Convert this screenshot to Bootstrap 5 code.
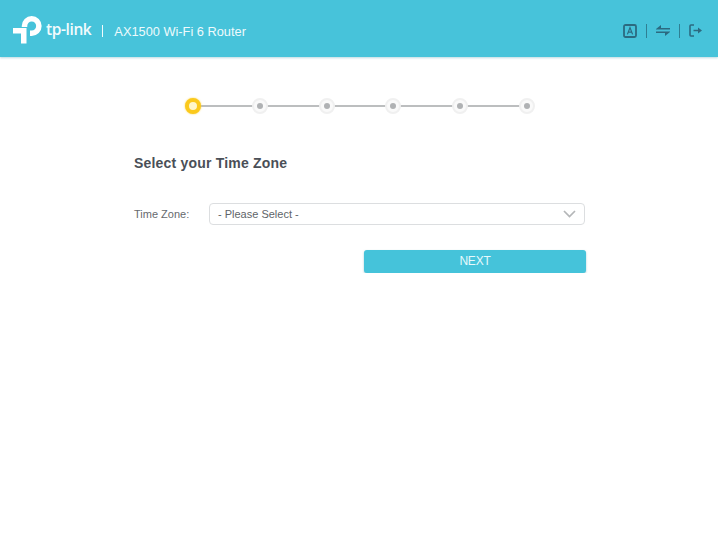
<!DOCTYPE html>
<html lang="en">
<head>
    <meta charset="UTF-8">
    <meta name="viewport" content="width=device-width, initial-scale=1.0">
    <title>Quick Setup</title>
    <link href="https://cdn.jsdelivr.net/npm/bootstrap@5.3.0/dist/css/bootstrap.min.css" rel="stylesheet">
    <style>
        body { font-family: "Liberation Sans", Arial, sans-serif; background: #fff; color: #4a4f55; }
        .top-bar { height: 57px; background: #47c3da; padding: 3px 16px 0 13px; box-shadow: 0 1px 2px rgba(60, 150, 170, .35); }
        .brand-name { font-family: "Open Sans", "Liberation Sans", sans-serif; font-size: 15.5px; font-weight: 600; color: #f2fbfd; letter-spacing: -.4px; margin-left: 3px; margin-top: -1px; }
        .brand-sep { width: 1px; height: 12px; background: #f2fbfd; margin: 2px 11px 0; }
        .model-name { font-size: 12.8px; color: #eefafc; margin-top: 3px; }
        .tool-icons { gap: 9px; margin-top: 1px; }
        .tool-sep { width: 1px; height: 14px; background: #2f7f93; }
        .page-body { width: 452px; margin-left: 134px; }
        .step-track { width: 350px; margin: 41px 0 0 51px; height: 16px; }
        .step-track::before { content: ""; position: absolute; left: 8px; right: 8px; top: 7px; height: 2px; background: #bcbebf; }
        .step-dot { width: 16px; height: 16px; border-radius: 50%; background: #fafafa; border: 2px solid #f0f0f0; display: flex; align-items: center; justify-content: center; position: relative; }
        .step-dot::after { content: ""; width: 6px; height: 6px; border-radius: 50%; background: #b0b2b4; }
        .step-dot.is-current { background: #fff6c9; border: 4px solid #fbc91c; box-shadow: 0 0 2px #fbd34a; }
        .step-dot.is-current::after { display: none; }
        .zone-title { font-size: 14px; font-weight: 700; color: #4a4f57; margin: 41px 0 0; letter-spacing: .2px; line-height: 16px; }
        .zone-row { margin-top: 32px; }
        .zone-label { width: 75px; font-size: 11px; color: #666a6e; }
        .zone-select { width: 376px; height: 22px; border: 1px solid #dcdee0; border-radius: 4px; padding: 0 8px; font-size: 11px; color: #606468; }
        .next-btn { width: 222px; height: 23px; margin: 25px 0 0 230px; padding: 0; background: #45c3da; border: 0; border-radius: 3px; color: #e6f9fc; font-size: 12px; line-height: 21px; letter-spacing: -.2px; box-shadow: 0 1px 2px rgba(60, 150, 170, .5); }
        .next-btn:hover { background: #45c3da; color: #e6f9fc; }
    </style>
</head>
<body>
    <header class="top-bar d-flex align-items-center">
        <svg width="30" height="28" viewBox="0 0 30 28" aria-label="tp-link logo">
            <path d="M11.5 11 V10 A7.2 7.2 0 1 1 18.7 17.2 H17" fill="none" stroke="#fff" stroke-width="5.5"/>
            <path d="M0 12 H13.5 V27.5 H8 V17.5 H0 Z" fill="#fff"/>
        </svg>
        <span class="brand-name">tp-link</span>
        <span class="brand-sep"></span>
        <span class="model-name">AX1500 Wi-Fi 6 Router</span>
        <div class="tool-icons ms-auto d-flex align-items-center">
            <svg width="14" height="14" viewBox="0 0 14 14" aria-label="Language">
                <rect x="1" y="1" width="12" height="12" rx="1.5" fill="none" stroke="#2c6a80" stroke-width="1.8"/>
                <path d="M4.4 10.4 L7 3.6 L9.6 10.4 M5.3 8.2 H8.7" fill="none" stroke="#2c6a80" stroke-width="1.2"/>
            </svg>
            <span class="tool-sep"></span>
            <svg width="14" height="11" viewBox="0 0 14 11" aria-label="Switch mode">
                <path d="M0 4 L5 0 V3 H14 V4.4 H0 Z M14 7 L9 11 V8 H0 V6.6 H14 Z" fill="#2c6a80"/>
            </svg>
            <span class="tool-sep"></span>
            <svg width="13" height="13" viewBox="0 0 13 13" aria-label="Log out">
                <path d="M5 1 H2 Q1 1 1 2 V11 Q1 12 2 12 H5" fill="none" stroke="#2c6a80" stroke-width="1.6"/>
                <path d="M4.5 5.8 H9 V3.5 L13 6.5 L9 9.5 V7.2 H4.5 Z" fill="#2c6a80"/>
            </svg>
        </div>
    </header>

    <main class="page-body">
        <div class="step-track d-flex justify-content-between align-items-center position-relative">
            <span class="step-dot is-current"></span>
            <span class="step-dot"></span>
            <span class="step-dot"></span>
            <span class="step-dot"></span>
            <span class="step-dot"></span>
            <span class="step-dot"></span>
        </div>
        <h1 class="zone-title">Select your Time Zone</h1>
        <div class="zone-row d-flex align-items-center">
            <label class="zone-label">Time Zone:</label>
            <div class="zone-select d-flex align-items-center justify-content-between">
                <span>- Please Select -</span>
                <svg width="13" height="8" viewBox="0 0 13 8"><path d="M1 1 L6.5 6.5 L12 1" fill="none" stroke="#b4b6b8" stroke-width="1.7"/></svg>
            </div>
        </div>
        <button type="button" class="btn next-btn d-block">NEXT</button>
    </main>
    <script src="https://cdn.jsdelivr.net/npm/bootstrap@5.3.0/dist/js/bootstrap.bundle.min.js"></script>
</body>
</html>
